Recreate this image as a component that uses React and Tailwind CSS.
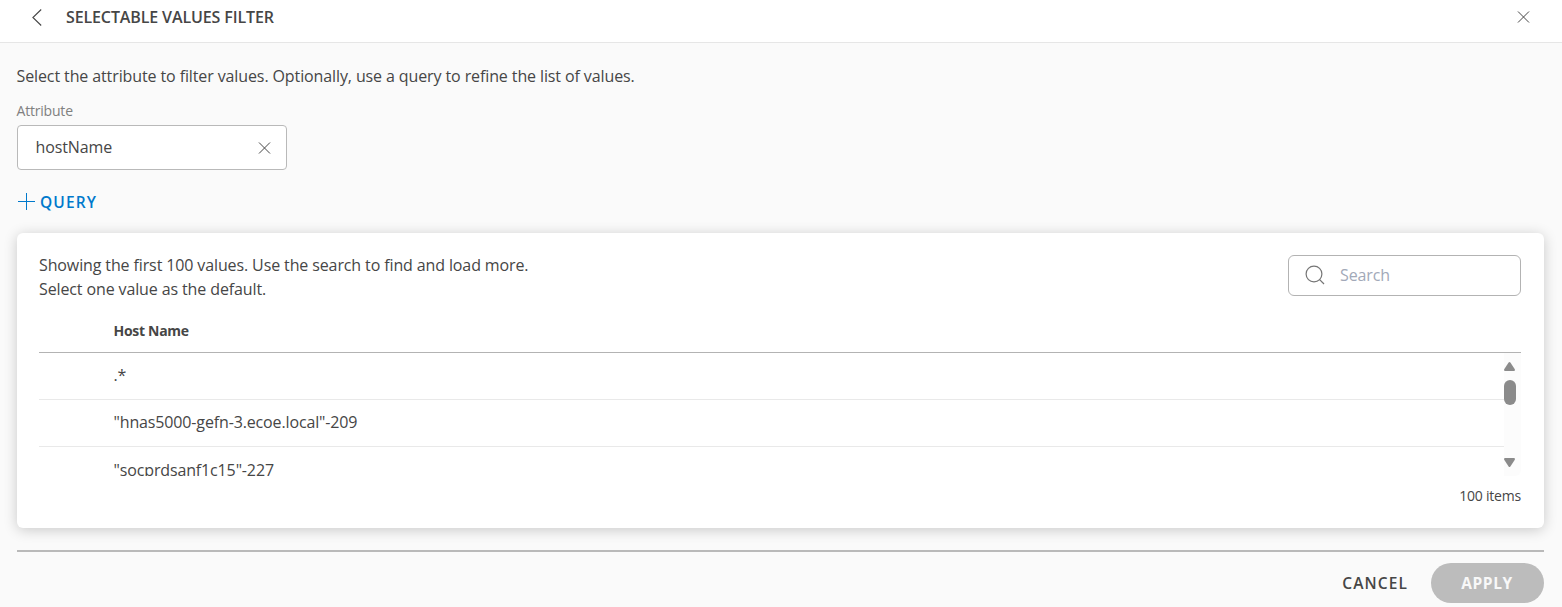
import React, { useState } from 'react';

const HOSTS = ['.*', '"hnas5000-gefn-3.ecoe.local"-209', '"socprdsanf1c15"-227'];

const CloseIcon = () => (
  <svg className="block w-[13px] h-3" viewBox="0 0 13 12" fill="none" stroke="currentColor" strokeWidth="1">
    <path d="M1 .5l11 11M12 .5l-11 11" />
  </svg>
);

const Header = () => (
  <header className="h-[43px] shrink-0 flex items-start border-b border-[#e6e6e6] bg-white px-8 pt-[5px]">
    <button className="h-6 w-[34px] flex items-center" aria-label="Back">
      <svg className="block w-[10px] h-[17px]" viewBox="0 0 10 17" fill="none" stroke="currentColor" strokeWidth="1.1">
        <path d="M9.2 .5L.9 8.5l8.3 8" />
      </svg>
    </button>
    <h1 className="text-base leading-6 font-semibold tracking-[-0.12px]">SELECTABLE VALUES FILTER</h1>
    <button className="ml-auto h-6 flex items-center" aria-label="Close">
      <CloseIcon />
    </button>
  </header>
);

const AttributeField = () => {
  const [value, setValue] = useState('hostName');
  return (
    <div>
      <label className="block -ml-[0.5px] mt-3 text-sm leading-[22px] tracking-[-0.2px] text-[#808080]">Attribute</label>
      <div className="mt-[3px] w-[270px] h-[45px] flex items-center justify-between rounded border border-[#b9b9b9] bg-white pl-[17.5px] pr-[15px]">
        <span className="pb-0.5">{value}</span>
        <button onClick={() => setValue('')} className="pt-px" aria-label="Clear">
          <CloseIcon />
        </button>
      </div>
    </div>
  );
};

const ValuesTable = () => (
  <div>
    <div className="h-[45px] flex items-center border-b border-[#b3b3b3] pl-[74.5px] pt-0.5 text-sm font-bold tracking-[-0.3px]">Host Name</div>
    <div className="h-[123px] flex overflow-hidden">
      <div className="flex-1 overflow-hidden">
        {HOSTS.map((host) => (
          <div key={host} className="h-[47px] flex items-center border-b border-[#e9e9e9] pb-[3px] pl-[74.5px] tracking-[-0.14px] last:pb-0">
            {host}
          </div>
        ))}
      </div>
      {/* Scrollbar */}
      <div className="w-[17px] flex flex-col items-start rounded-br-md bg-[#fcfcfc] text-[#8b8b8b] pt-[9px] pb-[9px]">
        <svg className="block w-[11px] h-[9px]" viewBox="0 0 11 9" fill="currentColor">
          <path d="M4.6 .6Q5.5-.4 6.4 .6L10.8 7.3Q11.3 9 10 9H1Q-.3 9 .2 7.3Z" />
        </svg>
        <div className="mt-[9px] w-3 h-[25px] rounded-full bg-[#8b8b8b]" />
        <svg className="block mt-auto w-[11px] h-[9px]" viewBox="0 0 11 9" fill="currentColor">
          <path d="M4.6 8.4Q5.5 9.4 6.4 8.4L10.8 1.7Q11.3 0 10 0H1Q-.3 0 .2 1.7Z" />
        </svg>
      </div>
    </div>
    <div className="pt-[9px] text-right text-sm leading-[22px] tracking-[-0.2px]">100 items</div>
  </div>
);

export default function App() {
  return (
    <div className="h-[607px] flex flex-col overflow-hidden bg-[#fafafa] font-['Open_Sans',sans-serif] text-base tracking-[-0.12px] text-[#464646]">
      <Header />
      <main className="pl-[17px] pr-[18px] pt-[21px]">
        <p className="-ml-[0.5px] leading-6 tracking-[-0.11px]">
          Select the attribute to filter values. Optionally, use a query to refine the list of values.
        </p>
        <AttributeField />

        <button className="mt-5 h-6 flex items-center gap-[5px] pl-px text-[#0079cc]">
          <svg className="block size-[17px] mb-0.5" viewBox="0 0 17 17" fill="none" stroke="currentColor" strokeWidth="1">
            <path d="M0 8.5h17M8.5 0v17" />
          </svg>
          <span className="pt-0.5 text-[15.5px] font-semibold tracking-[1.1px]">QUERY</span>
        </button>

        <section className="mt-[19px] h-[295px] rounded-md bg-white px-[22px] pr-[23px] pt-5 shadow-[0_2px_14px_rgba(0,0,0,0.2)]">
          <div className="flex justify-between h-[55px]">
            <p className="leading-6">
              Showing the first 100 values. Use the search to find and load more.
              <br />
              Select one value as the default.
            </p>
            <label className="mt-0.5 w-[233px] h-[41px] flex items-center gap-[15px] rounded-md border border-[#b3b3b3] pl-4">
              <svg className="block shrink-0 size-5 mb-px text-[#757575]" viewBox="0 0 20 20" fill="none" stroke="currentColor" strokeWidth="1.2">
                <circle cx="9" cy="9" r="7.9" />
                <path d="M14.4 14.4L19 19" />
              </svg>
              <input className="w-40 pb-0.5 outline-none placeholder:text-[#a2a9b8]" placeholder="Search" />
            </label>
          </div>
          <ValuesTable />
        </section>

        <footer className="mt-[22px] flex items-center justify-end gap-[23px] border-t-2 border-[#b9b9b9] pt-[11px] text-[15.5px] tracking-[1.1px]">
          <button className="pt-0.5 font-semibold">CANCEL</button>
          <button className="h-10 w-[113px] rounded-full bg-[#bcbcbc] pt-0.5 pr-px font-bold tracking-[0.6px] text-[#f8f8f8]">APPLY</button>
        </footer>
      </main>
    </div>
  );
}
